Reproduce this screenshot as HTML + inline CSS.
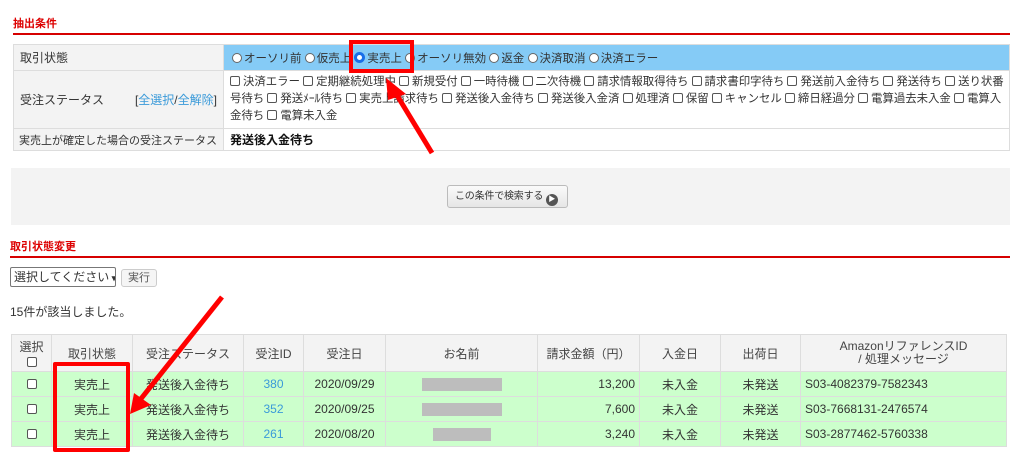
<!DOCTYPE html>
<html><head><meta charset="utf-8"><style>
*{box-sizing:border-box;margin:0;padding:0}
body{width:1024px;height:467px;background:#fff;font-family:"Liberation Sans","Noto Sans CJK JP",sans-serif;font-size:12px;color:#333;position:relative;overflow:hidden}
.a{position:absolute;white-space:nowrap}
.h{color:#d00;font-weight:bold;font-size:11px}
.line{height:2px;background:#d60000}
table{border-collapse:collapse;position:absolute;table-layout:fixed}
td{border:1px solid #ddd;padding:0 6px;vertical-align:middle}
.t1 td.l{background:#f3f3f3;white-space:nowrap}
.rb{display:inline-block;width:10px;height:10px;border:1px solid #666;border-radius:50%;background:#fff;vertical-align:-1px;margin-right:2px}
.rb.on{border:3px solid #1a6fe8;width:11px;height:11px}
.cb{display:inline-block;width:10px;height:10px;border:1px solid #555;border-radius:2px;background:#fff;vertical-align:-1px;margin-right:3px}
.t2 td{text-align:center;padding:0 4px;white-space:nowrap}
.t2 tr.g td{background:#ccffcc}
.t2 th{background:#f3f3f3;border:1px solid #ddd;font-weight:normal;color:#444}
a{color:#3a9ad9;text-decoration:none}
.blk{display:inline-block;height:13px;background:#bdbdbd;vertical-align:middle}
</style></head><body>
<div class="a h" style="left:13px;top:15px">抽出条件</div>
<div class="a line" style="left:13px;top:33px;width:997px"></div>
<table class="t1" style="left:13px;top:44px;width:997px">
<col style="width:210px"><col>
<tr style="height:26px"><td class="l">取引状態</td><td style="background:#85cbf6;padding-left:8px;font-size:11.5px"><span class="rb"></span>オーソリ前 <span class="rb"></span>仮売上 <span class="rb on"></span>実売上 <span class="rb"></span>オーソリ無効 <span class="rb"></span>返金 <span class="rb"></span>決済取消 <span class="rb"></span>決済エラー</td></tr>
<tr style="height:58px"><td class="l">受注ステータス<span style="float:right">[<a>全選択</a>/<a>全解除</a>]</span></td><td style="line-height:17px;padding:2px 4px 2px 6px;font-size:11.4px"><span class="cb"></span>決済エラー <span class="cb"></span>定期継続処理中 <span class="cb"></span>新規受付 <span class="cb"></span>一時待機 <span class="cb"></span>二次待機 <span class="cb"></span>請求情報取得待ち <span class="cb"></span>請求書印字待ち <span class="cb"></span>発送前入金待ち <span class="cb"></span>発送待ち <span class="cb"></span>送り状番号待ち <span class="cb"></span>発送ﾒｰﾙ待ち <span class="cb"></span>実売上請求待ち <span class="cb"></span>発送後入金待ち <span class="cb"></span>発送後入金済 <span class="cb"></span>処理済 <span class="cb"></span>保留 <span class="cb"></span>キャンセル <span class="cb"></span>締日経過分 <span class="cb"></span>電算過去未入金 <span class="cb"></span>電算入金待ち <span class="cb"></span>電算未入金</td></tr>
<tr style="height:22px"><td class="l" style="font-size:11px;padding-left:5px">実売上が確定した場合の受注ステータス</td><td style="font-weight:bold;color:#111">発送後入金待ち</td></tr>
</table>
<div class="a" style="left:11px;top:168px;width:999px;height:57px;background:#f3f3f3"></div>
<div class="a" style="left:447px;top:185px;width:121px;height:23px;border:1px solid #bbb;border-radius:3px;background:linear-gradient(#fafafa,#e6e6e6);font-size:10px;line-height:21px;padding-left:7px;letter-spacing:-0.2px">この条件で検索する <span style="display:inline-block;width:12px;height:12px;border-radius:50%;background:#555;color:#fff;font-size:7px;line-height:12px;text-align:center;vertical-align:-2px">▶</span></div>
<div class="a h" style="left:10px;top:238px">取引状態変更</div>
<div class="a line" style="left:10px;top:256px;width:1000px"></div>
<div class="a" style="left:10px;top:267px;width:106px;height:20px;border:1px solid #777;border-radius:2px;padding-left:3px;line-height:18px;overflow:hidden">選択してください<span style="font-size:9px;font-weight:bold"> ▾</span></div>
<div class="a" style="left:121px;top:269px;width:36px;height:18px;border:1px solid #ccc;border-radius:3px;background:#f5f5f5;text-align:center;line-height:16px;font-size:11px;color:#555">実行</div>
<div class="a" style="left:10px;top:303px">15件が該当しました。</div>
<table class="t2" style="left:11px;top:334px;width:996px">
<col style="width:40px"><col style="width:81px"><col style="width:111px"><col style="width:60px"><col style="width:82px"><col style="width:152px"><col style="width:102px"><col style="width:81px"><col style="width:80px"><col>
<tr style="height:37px"><th>選択<br><span class="cb" style="margin:0"></span></th><th>取引状態</th><th>受注ステータス</th><th>受注ID</th><th>受注日</th><th>お名前</th><th>請求金額（円）</th><th>入金日</th><th>出荷日</th><th style="line-height:13px">AmazonリファレンスID<br>/ 処理メッセージ</th></tr>
<tr class="g" style="height:25px"><td><span class="cb" style="margin:0"></span></td><td>実売上</td><td>発送後入金待ち</td><td><a>380</a></td><td>2020/09/29</td><td><span class="blk" style="width:80px"></span></td><td style="text-align:right">13,200</td><td>未入金</td><td>未発送</td><td style="text-align:left">S03-4082379-7582343</td></tr>
<tr class="g" style="height:25px"><td><span class="cb" style="margin:0"></span></td><td>実売上</td><td>発送後入金待ち</td><td><a>352</a></td><td>2020/09/25</td><td><span class="blk" style="width:80px"></span></td><td style="text-align:right">7,600</td><td>未入金</td><td>未発送</td><td style="text-align:left">S03-7668131-2476574</td></tr>
<tr class="g" style="height:25px"><td><span class="cb" style="margin:0"></span></td><td>実売上</td><td>発送後入金待ち</td><td><a>261</a></td><td>2020/08/20</td><td><span class="blk" style="width:58px"></span></td><td style="text-align:right">3,240</td><td>未入金</td><td>未発送</td><td style="text-align:left">S03-2877462-5760338</td></tr>
</table>
<div class="a" style="left:349px;top:40px;width:65px;height:33px;border:4px solid #f00"></div>
<div class="a" style="left:53px;top:362px;width:77px;height:90px;border:4px solid #f00;border-radius:2px"></div>
<svg class="a" style="left:0;top:0" width="1024" height="467">
<line x1="432" y1="153" x2="395" y2="92" stroke="#f00" stroke-width="5"/>
<polygon points="386,78 406,94 388,100" fill="#f00"/>
<line x1="222" y1="297" x2="140" y2="400" stroke="#f00" stroke-width="5"/>
<polygon points="130,414 134,393 151,405" fill="#f00"/>
</svg>
</body></html>
